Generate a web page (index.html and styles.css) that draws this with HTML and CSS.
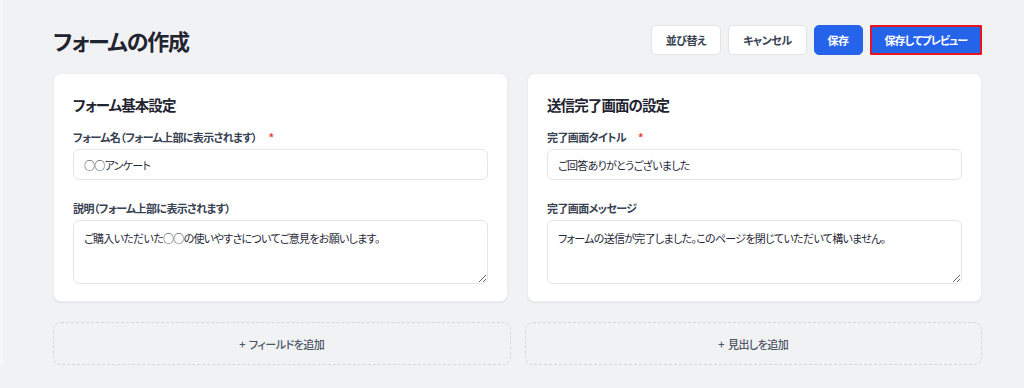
FILE: index.html
```html
<!DOCTYPE html>
<html lang="ja">
<head>
<meta charset="utf-8">
<title>フォームの作成</title>
<link rel="stylesheet" href="styles.css">
</head>
<body>
<div class="page">
  <header class="header">
    <h1 class="title">フォームの作成</h1>
    <div class="actions">
      <button class="btn btn-light">並び替え</button>
      <button class="btn btn-light">キャンセル</button>
      <button class="btn btn-primary">保存</button>
      <button class="btn btn-primary btn-focus">保存してプレビュー</button>
    </div>
  </header>
  <div class="cards">
    <section class="card">
      <h2 class="card-title">フォーム基本設定</h2>
      <div class="field">
        <label class="label">フォーム名（フォーム上部に表示されます）<span class="req">*</span></label>
        <input class="input" type="text" value="○○アンケート">
      </div>
      <div class="field">
        <label class="label">説明（フォーム上部に表示されます）</label>
        <textarea class="textarea">ご購入いただいた○○の使いやすさについてご意見をお願いします。</textarea>
      </div>
    </section>
    <section class="card">
      <h2 class="card-title">送信完了画面の設定</h2>
      <div class="field">
        <label class="label">完了画面タイトル<span class="req">*</span></label>
        <input class="input" type="text" value="ご回答ありがとうございました">
      </div>
      <div class="field">
        <label class="label">完了画面メッセージ</label>
        <textarea class="textarea">フォームの送信が完了しました。このページを閉じていただいて構いません。</textarea>
      </div>
    </section>
  </div>
  <div class="adders">
    <button class="adder"><span class="plus">+</span>フィールドを追加</button>
    <button class="adder"><span class="plus">+</span>見出しを追加</button>
  </div>
</div>
</body>
</html>
```

FILE: styles.css
```css
* { box-sizing: border-box; }
html, body {
  margin: 0;
  background: #f1f2f4;
  font-family: "Noto Sans CJK JP", "Inter", sans-serif;
  font-feature-settings: "palt";
  color: #1f2937;
}
button, input, textarea {
  font-feature-settings: "palt";
}
body { border-left: 3px solid #f6f7f8; }
.page {
  padding: 24px 42px 0 50px;
}
.header {
  display: flex;
  justify-content: space-between;
  align-items: center;
  height: 31px;
  margin-bottom: 18px;
}
.title {
  margin: 0;
  font-size: 22px;
  font-weight: 700;
  letter-spacing: -1.2px;
  color: #1f2430;
}
.actions {
  display: flex;
  gap: 7px;
}
.btn {
  height: 30px;
  border-radius: 5px;
  font-family: inherit;
  font-size: 11px;
  font-weight: 600;
  letter-spacing: -0.5px;
  cursor: pointer;
}
.btn-light {
  background: #fff;
  border: 1px solid #e2e4e8;
  color: #374151;
  padding: 0 14px;
}
.btn-primary {
  background: #2563eb;
  border: 1px solid #2563eb;
  color: #fff;
  padding: 0 13px;
}
.btn-focus {
  border: 2px solid #e5141e;
  border-radius: 1px;
  padding: 0 13px;
  letter-spacing: -1px;
}
.cards {
  display: grid;
  grid-template-columns: 1fr 1fr;
  gap: 19px;
}
.card {
  background: #fff;
  border-radius: 8px;
  box-shadow: 0 1px 2px rgba(0,0,0,0.06);
  border: 1px solid #eceef1;
  padding: 20px 19px 17px;
}
.card-title {
  margin: 0 0 13px;
  font-size: 14.5px;
  line-height: 22px;
  font-weight: 700;
  letter-spacing: -0.9px;
  color: #1f2430;
}
.field + .field { margin-top: 20px; }
.label {
  display: block;
  font-size: 11px;
  line-height: 16px;
  font-weight: 600;
  letter-spacing: -0.6px;
  color: #374151;
  margin-bottom: 4px;
}
.req {
  color: #ef4444;
  margin-left: 12px;
}
.input, .textarea {
  display: block;
  width: 100%;
  border: 1px solid #e3e5e9;
  border-radius: 6px;
  background: #fff;
  font-family: inherit;
  font-size: 11px;
  letter-spacing: -0.7px;
  color: #1f2937;
  padding: 0 10px;
}
.input { height: 31px; }
.textarea {
  height: 64px;
  padding: 9px 10px;
  line-height: 16px;
  resize: vertical;
}
.adders {
  display: grid;
  grid-template-columns: 1fr 1fr;
  gap: 14px;
  margin-top: 20px;
}
.adder {
  height: 43px;
  background: transparent;
  border: 1px dashed #d4d7dc;
  border-radius: 8px;
  font-family: inherit;
  font-size: 11px;
  font-weight: 500;
  letter-spacing: -0.5px;
  color: #4b5563;
}
.plus { margin-right: 4px; }
```
